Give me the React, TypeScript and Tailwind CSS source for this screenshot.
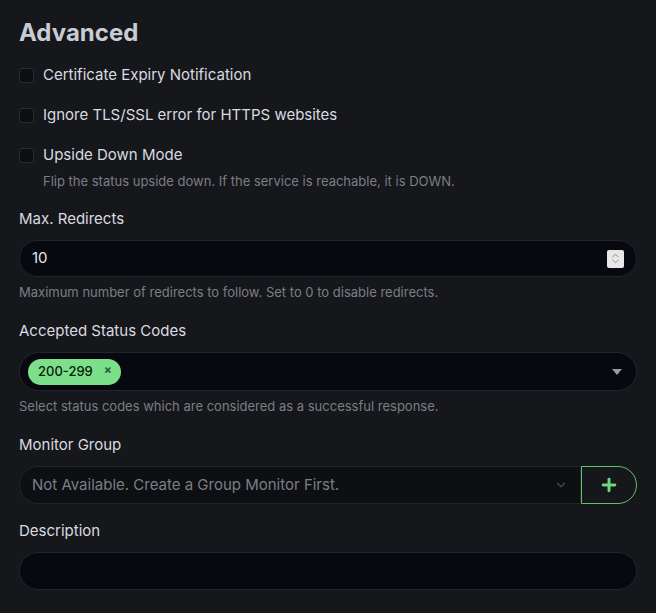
import { ChevronDown, Plus, ChevronsUpDown } from "lucide-react";

function Check({ label }: { label: string }) {
  return (
    <div className="flex items-center gap-[9px] h-[20px]">
      <span className="w-[15px] h-[15px] rounded-[3px] border border-[#2a2c31] bg-[#0d0e12]" />
      <span className="text-[15px] text-[#d9dbe0]">{label}</span>
    </div>
  );
}

function Label({ children }: { children: React.ReactNode }) {
  return <div className="text-[15px] text-[#d9dbe0] leading-[20px]">{children}</div>;
}

function Help({ children }: { children: React.ReactNode }) {
  return <div className="text-[13px] text-[#7b7e85] leading-[18px]">{children}</div>;
}

export default function App() {
  return (
    <div
      className="w-[656px] h-[613px] bg-[#16171b] px-[19px] pt-[16px]"
      style={{ fontFamily: "Inter, Roboto, 'Liberation Sans', sans-serif" }}
    >
      <h2 className="text-[24px] font-bold text-[#c8ccd4] leading-[34px]">Advanced</h2>
      <div className="mt-[15px] flex flex-col gap-[20px]">
        <Check label="Certificate Expiry Notification" />
        <Check label="Ignore TLS/SSL error for HTTPS websites" />
        <div>
          <Check label="Upside Down Mode" />
          <div className="pl-[24px] mt-[7px]">
            <Help>Flip the status upside down. If the service is reachable, it is DOWN.</Help>
          </div>
        </div>
      </div>

      <div className="mt-[19px]">
        <Label>Max. Redirects</Label>
        <div className="mt-[11px] h-[37px] rounded-full bg-[#070810] border border-[#23252b] flex items-center px-[12px] justify-between">
          <span className="text-[15px] text-[#e4e6ea]">10</span>
          <span className="w-[17px] h-[18px] bg-[#e8e8e8] rounded-[2px] flex items-center justify-center">
            <ChevronsUpDown size={13} strokeWidth={1.5} className="text-[#777]" />
          </span>
        </div>
        <div className="mt-[6px]">
          <Help>Maximum number of redirects to follow. Set to 0 to disable redirects.</Help>
        </div>
      </div>

      <div className="mt-[20px]">
        <Label>Accepted Status Codes</Label>
        <div className="mt-[11px] h-[39px] rounded-full bg-[#070810] border border-[#23252b] flex items-center pl-[8px] pr-[14px] justify-between">
          <span className="h-[26px] rounded-full bg-[#7ce08a] flex items-center pl-[10px] pr-[9px] gap-[11px]">
            <span className="text-[13px] font-medium text-[#0b1a0e]">200-299</span>
            <span className="text-[12px] font-bold text-[#2d5a35] -mt-[4px]">×</span>
          </span>
          <span className="w-0 h-0 border-l-[5px] border-r-[5px] border-t-[6px] border-l-transparent border-r-transparent border-t-[#9a9ca2]" />
        </div>
        <div className="mt-[6px]">
          <Help>Select status codes which are considered as a successful response.</Help>
        </div>
      </div>

      <div className="mt-[20px]">
        <Label>Monitor Group</Label>
        <div className="mt-[11px] flex h-[38px]">
          <div className="flex-1 rounded-l-full bg-[#0e0f13] border border-[#23252b] flex items-center justify-between pl-[12px] pr-[12px]">
            <span className="text-[15px] text-[#7b7e85]">Not Available. Create a Group Monitor First.</span>
            <ChevronDown size={14} className="text-[#4a4c52]" />
          </div>
          <div className="w-[56px] rounded-r-full border border-[#5cc66b] flex items-center justify-center">
            <Plus size={20} strokeWidth={3.5} className="text-[#6fd77e]" />
          </div>
        </div>
      </div>

      <div className="mt-[17px]">
        <Label>Description</Label>
        <div className="mt-[11px] h-[38px] rounded-full bg-[#070810] border border-[#23252b]" />
      </div>
    </div>
  );
}
